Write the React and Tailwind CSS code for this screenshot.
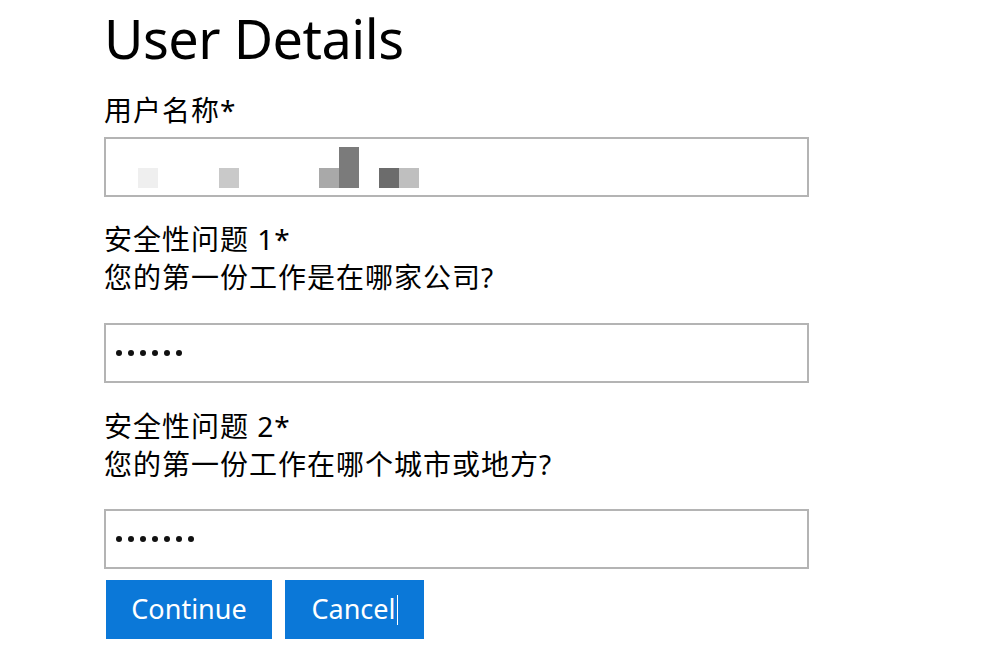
import React from 'react';

const font = { fontFamily: '"Noto Sans", "Noto Sans CJK SC", sans-serif' };

// pixelated redaction of the username value
const Redacted = () => (
  <div className="flex items-end h-[41px]">
    <div className="w-[20px] h-[20px] ml-[24px] bg-[#efefef]" />
    <div className="w-[20px] h-[20px] ml-[61px] bg-[#c9c9c9]" />
    <div className="w-[20px] h-[20px] ml-[80px] bg-[#a9a9a9]" />
    <div className="w-[20px] h-[41px] bg-[#7b7b7b]" />
    <div className="w-[20px] h-[20px] ml-[20px] bg-[#6c6c6c]" />
    <div className="w-[20px] h-[20px] bg-[#bfbfbf]" />
  </div>
);

const Field = ({ children }) => (
  <div className="w-[705px] h-[60px] border-2 border-[#b4b4b4] bg-white flex items-center px-[8px]">
    {children}
  </div>
);

const Dots = ({ count }) => (
  <div className="flex gap-[6px] pl-[2px]">
    {Array.from({ length: count }).map((_, i) => (
      <span key={i} className="w-[6px] h-[6px] rounded-full bg-[#111]" />
    ))}
  </div>
);

const Line = ({ children }) => (
  <div className="h-[38px] leading-[38px] text-[28px] tracking-[1px] whitespace-nowrap">{children}</div>
);

export default function App() {
  return (
    <div className="min-h-screen bg-white text-black" style={font}>
      <div className="ml-[104px] flex flex-col">
        <h1 className="h-[72px] text-[54px] leading-[72px] mt-[2px] tracking-[-0.5px] whitespace-nowrap">User Details</h1>

        <div className="mt-[17px]">
          <Line>用户名称*</Line>
        </div>
        <div className="mt-[8px]">
          <Field>
            <Redacted />
          </Field>
        </div>

        <div className="mt-[23px]">
          <Line>安全性问题 1*</Line>
          <Line>您的第一份工作是在哪家公司?</Line>
        </div>
        <div className="mt-[27px]">
          <Field>
            <Dots count={6} />
          </Field>
        </div>

        <div className="mt-[24px]">
          <Line>安全性问题 2*</Line>
          <Line>您的第一份工作在哪个城市或地方?</Line>
        </div>
        <div className="mt-[26px]">
          <Field>
            <Dots count={7} />
          </Field>
        </div>

        <div className="flex gap-[13px] mt-[11px] ml-[2px]">
          <button className="w-[166px] h-[59px] bg-[#0b78d8] text-white text-[27px]">Continue</button>
          <button className="w-[139px] h-[59px] bg-[#0b78d8] text-white text-[27px] flex items-center justify-center">
            Cancel<span className="w-[1px] h-[30px] bg-white ml-[1px]" />
          </button>
        </div>
      </div>
    </div>
  );
}
